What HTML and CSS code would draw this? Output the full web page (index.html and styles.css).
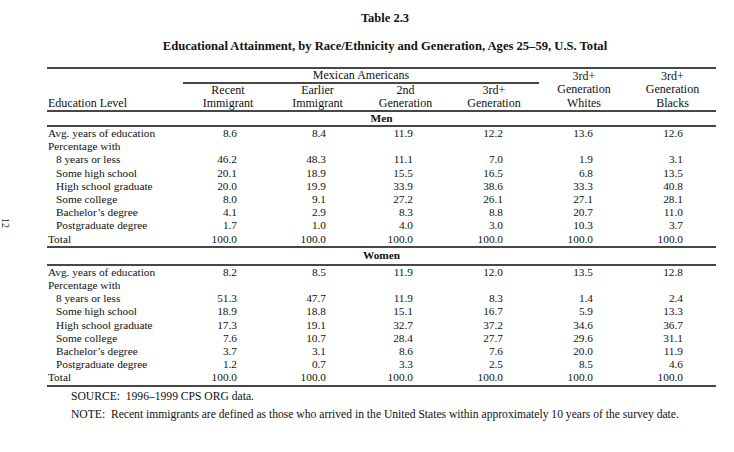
FILE: index.html
```html
<!DOCTYPE html>
<html>
<head>
<meta charset="utf-8">
<link rel="stylesheet" href="styles.css">
</head>
<body>
<div class="page">
  <div class="folio">12</div>
  <h1 class="title">Table 2.3</h1>
  <h2 class="subtitle">Educational Attainment, by Race/Ethnicity and Generation, Ages 25–59, U.S. Total</h2>
  <table class="data">
    <colgroup>
      <col class="c-label"><col class="c1"><col class="c2"><col class="c3"><col class="c4"><col class="c5"><col class="c6">
    </colgroup>
    <thead>
      <tr class="h1">
        <th class="lab" rowspan="2">Education Level</th>
        <th class="group" colspan="4">Mexican Americans</th>
        <th class="hd tall" rowspan="2">3rd+<br>Generation<br>Whites</th>
        <th class="hd tall" rowspan="2">3rd+<br>Generation<br>Blacks</th>
      </tr>
      <tr class="h2">
        <th class="hd">Recent<br>Immigrant</th>
        <th class="hd">Earlier<br>Immigrant</th>
        <th class="hd">2nd<br>Generation</th>
        <th class="hd">3rd+<br>Generation</th>
      </tr>
    </thead>
    <tbody>
      <tr class="sect"><td colspan="7">Men</td></tr>
      <tr><td class="lab">Avg. years of education</td><td>8.6</td><td>8.4</td><td>11.9</td><td>12.2</td><td>13.6</td><td>12.6</td></tr>
      <tr><td class="lab">Percentage with</td><td></td><td></td><td></td><td></td><td></td><td></td></tr>
      <tr><td class="lab sub">8 years or less</td><td>46.2</td><td>48.3</td><td>11.1</td><td>7.0</td><td>1.9</td><td>3.1</td></tr>
      <tr><td class="lab sub">Some high school</td><td>20.1</td><td>18.9</td><td>15.5</td><td>16.5</td><td>6.8</td><td>13.5</td></tr>
      <tr><td class="lab sub">High school graduate</td><td>20.0</td><td>19.9</td><td>33.9</td><td>38.6</td><td>33.3</td><td>40.8</td></tr>
      <tr><td class="lab sub">Some college</td><td>8.0</td><td>9.1</td><td>27.2</td><td>26.1</td><td>27.1</td><td>28.1</td></tr>
      <tr><td class="lab sub">Bachelor’s degree</td><td>4.1</td><td>2.9</td><td>8.3</td><td>8.8</td><td>20.7</td><td>11.0</td></tr>
      <tr><td class="lab sub">Postgraduate degree</td><td>1.7</td><td>1.0</td><td>4.0</td><td>3.0</td><td>10.3</td><td>3.7</td></tr>
      <tr class="total"><td class="lab">Total</td><td>100.0</td><td>100.0</td><td>100.0</td><td>100.0</td><td>100.0</td><td>100.0</td></tr>
      <tr class="sect sect-women"><td colspan="7">Women</td></tr>
      <tr><td class="lab">Avg. years of education</td><td>8.2</td><td>8.5</td><td>11.9</td><td>12.0</td><td>13.5</td><td>12.8</td></tr>
      <tr><td class="lab">Percentage with</td><td></td><td></td><td></td><td></td><td></td><td></td></tr>
      <tr><td class="lab sub">8 years or less</td><td>51.3</td><td>47.7</td><td>11.9</td><td>8.3</td><td>1.4</td><td>2.4</td></tr>
      <tr><td class="lab sub">Some high school</td><td>18.9</td><td>18.8</td><td>15.1</td><td>16.7</td><td>5.9</td><td>13.3</td></tr>
      <tr><td class="lab sub">High school graduate</td><td>17.3</td><td>19.1</td><td>32.7</td><td>37.2</td><td>34.6</td><td>36.7</td></tr>
      <tr><td class="lab sub">Some college</td><td>7.6</td><td>10.7</td><td>28.4</td><td>27.7</td><td>29.6</td><td>31.1</td></tr>
      <tr><td class="lab sub">Bachelor’s degree</td><td>3.7</td><td>3.1</td><td>8.6</td><td>7.6</td><td>20.0</td><td>11.9</td></tr>
      <tr><td class="lab sub">Postgraduate degree</td><td>1.2</td><td>0.7</td><td>3.3</td><td>2.5</td><td>8.5</td><td>4.6</td></tr>
      <tr class="total last"><td class="lab">Total</td><td>100.0</td><td>100.0</td><td>100.0</td><td>100.0</td><td>100.0</td><td>100.0</td></tr>
    </tbody>
  </table>
  <div class="notes">
    <p>SOURCE:&nbsp; 1996–1999 CPS ORG data.</p>
    <p>NOTE:&nbsp; Recent immigrants are defined as those who arrived in the United States within approximately 10 years of the survey date.</p>
  </div>
</div>
</body>
</html>
```

FILE: styles.css
```css
* { box-sizing: border-box; }

html, body {
  margin: 0;
  padding: 0;
  background: #ffffff;
}

body {
  font-family: "Liberation Serif", "Times New Roman", serif;
  color: #111111;
  width: 734px;
  height: 452px;
  overflow: hidden;
}

.page {
  position: relative;
  padding-top: 11px;
}

.folio {
  position: absolute;
  left: 0;
  top: 218px;
  font-size: 10px;
  line-height: 10px;
  transform: rotate(90deg);
  color: #222;
}

.title {
  margin: 0 0 0 36px;
  text-align: center;
  font-size: 12.5px;
  line-height: 14px;
  font-weight: bold;
}

.subtitle {
  margin: 14px 0 0 36px;
  text-align: center;
  font-size: 12.6px;
  line-height: 14px;
  font-weight: bold;
}

.data {
  margin: 14px 0 0 47px;
  width: 669px;
  border-collapse: collapse;
  table-layout: fixed;
  font-size: 11.3px;
  border-top: 2px solid #474747;
}

.c-label { width: 136px; }
.c1 { width: 90px; }
.c2 { width: 89px; }
.c3 { width: 87px; }
.c4 { width: 90px; }
.c5 { width: 90px; }
.c6 { width: 87px; }

.data th {
  font-weight: normal;
  font-size: 12px;
  padding: 0;
  line-height: 13px;
  text-align: center;
  vertical-align: bottom;
}

.data th.lab {
  text-align: left;
  padding-left: 1px;
}

.data th.tall {
  line-height: 13.5px;
}

.data th.group {
  height: 13px;
  border-bottom: 2px solid #474747;
  vertical-align: middle;
  line-height: 13px;
}

.data thead tr:last-child th,
.data thead th[rowspan] {
  border-bottom: 2px solid #474747;
}

.data td {
  padding: 0 36px 0 0;
  line-height: 13.2px;
  height: 13.2px;
  text-align: right;
  white-space: nowrap;
}

.data td:last-child { padding-right: 33px; }

.data td.lab {
  text-align: left;
  padding: 0 0 0 1px;
}

.data td.lab.sub { padding-left: 9px; }

.data tr.sect td {
  text-align: center;
  font-weight: bold;
  padding: 0;
  height: 15px;
  line-height: 13px;
  border-bottom: 2px solid #474747;
}

.data tr.sect-women td {
  height: 18px;
  padding-top: 1px;
  vertical-align: top;
}

.data tr.total td {
  border-bottom: 2px solid #474747;
}

.data tr.sect td:last-child { padding-right: 0; }

.notes {
  margin: 3px 0 0 71px;
  font-size: 11.6px;
}

.notes p {
  margin: 0 0 5px 0;
  line-height: 13px;
}
```
